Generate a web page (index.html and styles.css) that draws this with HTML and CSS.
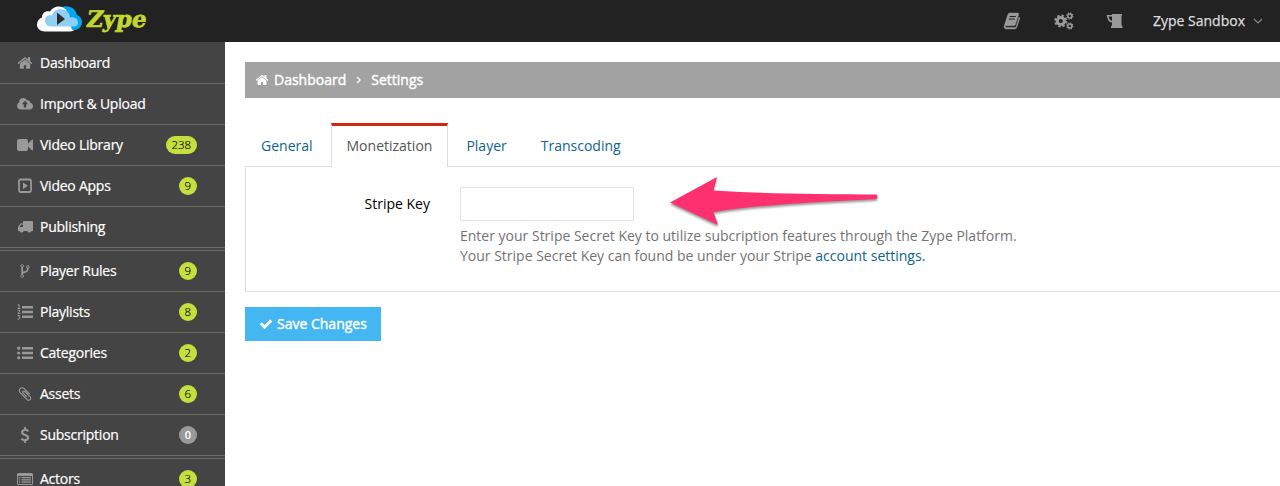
FILE: index.html
```html
<!DOCTYPE html>
<html lang="en">
<head>
<meta charset="utf-8">
<title>Zype - Settings</title>
<link rel="stylesheet" href="styles.css">
</head>
<body>
<svg class="defs" width="0" height="0">
  <symbol id="home" viewBox="0 0 1792 1792"><path d="M1472 992v480q0 26-19 45t-45 19h-384v-384h-256v384h-384q-26 0-45-19t-19-45v-480q0-1 .5-3t.5-3l575-474 575 474q1 2 1 6zm223-69l-62 74q-8 9-21 11h-3q-13 0-21-7l-692-577-692 577q-12 8-24 7-13-2-21-11l-62-74q-8-10-7-23.500t11-21.500l719-599q32-26 76-26t76 26l244 204v-195q0-14 9-23t23-9h192q14 0 23 9t9 23v408l219 182q10 8 11 21.500t-7 23.500z"/></symbol>
</svg>
<header class="topbar">
  <a class="brand">
    <svg width="124" height="34" viewBox="0 0 124 34">
      <path fill="#00a6ee" d="M20 8C22 3 28 1 33 3c4 1 6 4 7 8 3 1 5 4 5 7 0 5-4 8-8 8H22z"/>
      <path fill="#fff" d="M8 27.500c-5 0-8-3-8-7 0-3 2-6 5-7 0-4 3-7 8-6 3-5 9-6 13-4 4 2 6 5 7 8 4 1 7 4 7 8 0 5-3 8-7 8z"/>
      <path fill="#00a6ee" d="M29 4.500c4 1 7 4 7.500 7.500 4 1 7 3 6 8-.5 4-3 6-7 6l-3-6z"/>
      <path fill="#8ed0f3" d="M14 22.500c-4 0-6-3-6-6 0-4 3-6 7-5 1-4 5-7 10-6 5 0 8 4 8 8 5-1 8 2 8 5 0 2-1 4-4 4z"/>
      <path fill="#2d2d2d" d="M20 8.500 28 15l-8 6z"/>
      <text class="brand-name" transform="translate(48.500 22.500) skewX(-10)" textLength="60" lengthAdjust="spacingAndGlyphs">Zype</text>
    </svg>
  </a>
  <nav class="tools">
    <svg width="18" height="18" viewBox="0 0 18 18"><path fill="currentColor" d="M6.500 1h8.300q1.200.1.900 1.300l-3.300 10.200q-.4 1.200-1.500 1.200H3q-.8.100-.7 1 .1.800 1.200.8h8.600q.6 0 .9-.8l3-9.700q1.100.5.700 1.700l-3 8.900q-.5 1.400-1.900 1.400H3.200q-2-.1-2.200-2.300l3.400-11Q5 1.200 6.500 1z" stroke="currentColor" stroke-width=".4"/><path d="M6.700 4.500h6M5.800 7h6" stroke="#222" stroke-width="1.100"/></svg>
    <svg width="20" height="18" viewBox="0 0 20 18" fill="none" stroke="currentColor"><circle cx="6.800" cy="9" r="3.600" stroke-width="3"/><circle cx="6.800" cy="9" r="5.500" stroke-width="2" stroke-dasharray="2.400 1.920"/><g id="small-gear"><circle cx="15.800" cy="4" r="2" stroke-width="1.500"/><circle cx="15.800" cy="4" r="3" stroke-width="1.200" stroke-dasharray="1.300 1.056"/></g><use href="#small-gear" y="10"/></svg>
    <svg width="18" height="18" viewBox="0 0 18 18"><path fill="currentColor" fill-rule="evenodd" d="M6 2h10v1l-.5 1v9l1 1.500V16H5v-1.500l1-1.500v-2.500Q2.500 10 2 7.500L.7 4V3H6zM2.700 4.500 3.500 7Q4 8.500 6 8.700V4.500z"/></svg>
  </nav>
  <a class="account">Zype Sandbox
    <svg width="10" height="7" viewBox="0 0 10 7"><path d="m1 1 4 4 4-4" fill="none" stroke="#888" stroke-width="1.200"/></svg>
  </a>
</header>
<div class="page">
  <aside class="sidebar">
    <a class="item"><svg class="icon" viewBox="0 0 16 16"><use href="#home"/></svg><span>Dashboard</span></a>
    <a class="item"><svg class="icon" viewBox="0 0 16 16"><path fill-rule="evenodd" d="M4 13.500Q.2 13.300 0 9.800 0 7.500 2.200 6.500 2 2.500 6 2.100q3-.1 4.300 2.500 2.600-.8 3 2.200Q16 7.500 16 10.300q-.2 3-3 3.200zM8 4.800 4.800 8.200h2v3.300h2.400V8.200h2z"/></svg><span>Import &amp; Upload</span></a>
    <a class="item"><svg class="icon" viewBox="0 0 16 16"><path d="M2 2h7q2 0 2 2v2.500l3.500-3.600q1.500-1 1.500.5v9.200q0 1.500-1.500.5L11 9.500V12q0 2-2 2H2q-2 0-2-2V4q0-2 2-2z"/></svg><span>Video Library</span><b class="badge">238</b></a>
    <a class="item"><svg class="icon" viewBox="0 0 16 16"><rect x="2" y="1.500" width="12" height="12.500" rx="1.500" fill="none" stroke="#999" stroke-width="1.800"/><path d="m6 4.500 5 3.300-5 3.400z"/></svg><span>Video Apps</span><b class="badge">9</b></a>
    <a class="item"><svg class="icon" viewBox="0 0 16 16"><path fill-rule="evenodd" d="M7 2h8q1 0 1 1v9h-1.500a2.200 2.200 0 0 1-4.200 0H6.700a2.200 2.200 0 0 1-4.200 0H1V8l2.500-3.500H6V3q0-1 1-1zM2.500 8H6V5.500H4.200z"/></svg><span>Publishing</span></a>
    <div class="divider"></div>
    <a class="item"><svg class="icon" viewBox="0 0 1792 1792"><path d="M672 1472q0-40-28-68t-68-28-68 28-28 68 28 68 68 28 68-28 28-68zm0-1152q0-40-28-68t-68-28-68 28-28 68 28 68 68 28 68-28 28-68zm640 128q0-40-28-68t-68-28-68 28-28 68 28 68 68 28 68-28 28-68zm96 0q0 52-26 96.500t-70 69.500q-2 287-226 414-67 38-203 81-128 40-169.500 71t-41.500 100v26q44 25 70 69.500t26 96.500q0 80-56 136t-136 56-136-56-56-136q0-52 26-96.500t70-69.500v-820q-44-25-70-69.500t-26-96.500q0-80 56-136t136-56 136 56 56 136q0 52-26 96.500t-70 69.500v497q54-26 154-57 55-17 87.500-29.500t70.500-31 59-39.500 40.500-51 28-69.500 8.500-91.500q-44-25-70-69.500t-26-96.500q0-80 56-136t136-56 136 56 56 136z"/></svg><span>Player Rules</span><b class="badge">9</b></a>
    <a class="item"><svg class="icon" viewBox="0 0 16 16"><path d="M5 2h11v2.400H5zm0 4.800h11v2.400H5zm0 4.800h11V14H5z"/><path d="M.8 1.200 2 .5v4M.5 4.500h3M.6 6.500Q3.200 5.400 3 7L.8 9.500h2.700M.6 11.500h2.200l-1.200 1.400Q3.200 13 3 14.300q-.8 1.500-2.500.7" fill="none" stroke="#999"/></svg><span>Playlists</span><b class="badge">8</b></a>
    <a class="item"><svg class="icon" viewBox="0 0 16 16"><path d="M5 2h11v2.400H5zm0 4.800h11v2.400H5zm0 4.800h11V14H5z"/><circle cx="1.700" cy="3.200" r="1.600"/><circle cx="1.700" cy="8" r="1.600"/><circle cx="1.700" cy="12.800" r="1.600"/></svg><span>Categories</span><b class="badge">2</b></a>
    <a class="item"><svg class="icon" viewBox="0 0 1792 1792"><path d="M1596 1385q0 117-79 196t-196 79q-135 0-235-100l-777-776q-113-115-113-271 0-159 110-270t269-111q158 0 273 113l605 606q10 10 10 22 0 16-30.500 46.500t-46.500 30.500q-13 0-23-10l-606-607q-79-77-181-77-106 0-179 75t-73 181q0 105 76 181l776 777q63 63 145 63 64 0 106-42t42-106q0-82-63-145l-581-581q-26-24-60-24-29 0-48 19t-19 48q0 32 25 59l410 410q10 10 10 22 0 16-31 47t-47 31q-12 0-22-10l-410-410q-63-61-63-149 0-82 57-139t139-57q88 0 149 63l581 581q100 98 100 235z"/></svg><span>Assets</span><b class="badge">6</b></a>
    <a class="item"><svg class="icon" viewBox="0 0 1792 1792"><path d="M1362 1185q0 153-99.500 263.500t-258.500 136.500v175q0 14-9 23t-23 9h-135q-13 0-22.500-9.500t-9.500-22.500v-175q-66-9-127.500-31t-101.500-44.500-74-48-46.500-37.500-17.500-18q-17-21-2-41l103-135q7-10 23-12 15-2 24 9l2 2q113 99 243 125 37 8 74 8 81 0 142.500-43t61.500-122q0-28-15-53t-33.500-42-58.500-37.500-66-32-80-32.500q-39-16-61.500-25t-61.500-26.500-62.500-31-56.500-35.500-53.500-42.500-43.500-49-35.500-58-21-66.500-8.500-78q0-138 98-242t255-134v-180q0-13 9.500-22.500t22.500-9.500h135q14 0 23 9t9 23v176q57 6 110.500 23t87 33.500 63.500 37.500 39 29 15 14q17 18 5 38l-81 146q-8 15-23 16-14 3-27-7-3-3-14.500-12t-39-26.500-58.500-32-74.500-26-85.500-11.500q-95 0-155 43t-60 111q0 26 8.500 48t29.500 41.500 39.500 33 56 31 60.500 27 70 27.500q53 20 81 31.500t76 35 75.500 42.500 62 50 53 63.500 31.500 76.500 13 94z"/></svg><span>Subscription</span><b class="badge badge-empty">0</b></a>
    <div class="divider"></div>
    <a class="item"><svg class="icon" viewBox="0 0 16 16"><path fill-rule="evenodd" d="M1.500 2h13Q16 2 16 3.500v9q0 1.500-1.500 1.500h-13Q0 14 0 12.500v-9Q0 2 1.500 2zM1 5v8h14V5z"/><path d="M2 6h1.200v1.200H2zm2.500 0H14v1.200H4.500zM2 8.300h1.200v1.200H2zm2.500 0H14v1.200H4.500zM2 10.600h1.200v1.200H2zm2.500 0H14v1.200H4.500z"/></svg><span>Actors</span><b class="badge">3</b></a>
  </aside>
  <main class="content">
    <div class="breadcrumb">
      <svg class="crumb-home" viewBox="0 0 16 16"><use href="#home"/></svg><span>Dashboard</span>
      <svg class="crumb-arrow" viewBox="0 0 6 8"><path d="m1 1 3.200 3L1 7" fill="none" stroke="#fff" stroke-width="1.200"/></svg><span>Settings</span>
    </div>
    <div class="tabs">
      <a class="tab">General</a><a class="tab active">Monetization</a><a class="tab">Player</a><a class="tab">Transcoding</a>
    </div>
    <section class="panel">
      <label class="field-label" for="stripe-key">Stripe Key</label>
      <div class="field">
        <input id="stripe-key" class="field-input" type="text">
        <p class="help">Enter your Stripe Secret Key to utilize subcription features through the Zype Platform.<br>Your Stripe Secret Key can found be under your Stripe <a>account settings.</a></p>
        <svg class="arrow" width="216" height="58" viewBox="0 0 216 58"><path fill="#ff306f" d="M4 29.500 51 4l-3.500 13.500C100 21 160 21 210 21.500c2 .5 2 4 0 4.500-50 2.500-110 5-162.500 13L52 52z"/></svg>
      </div>
    </section>
    <button class="save" type="button"><svg width="14" height="14" viewBox="0 0 1792 1792"><path fill="#fff" d="M1671 566q0 40-28 68l-724 724-136 136q-28 28-68 28t-68-28l-136-136-362-362q-28-28-28-68t28-68l136-136q28-28 68-28t68 28l294 295 656-657q28-28 68-28t68 28l136 136q28 28 28 68z"/></svg>Save Changes</button>
  </main>
</div>
</body>
</html>
```
FILE: styles.css
```css
* { box-sizing: border-box; }
body {
  margin: 0;
  height: 486px;
  overflow: hidden;
  background: #fff;
  font: 14px/20px "Open Sans", sans-serif;
  color: #000;
}
.defs { display: block; }
.topbar {
  display: flex;
  align-items: center;
  height: 42px;
  padding: 0 17px 0 37px;
  background: #222;
}
.brand { display: flex; }
.brand svg { overflow: visible; }
.brand-name {
  fill: #c3d82e;
  stroke: #c3d82e;
  stroke-width: .7px;
  font: bold 23px "DejaVu Serif", serif;
}
.tools { display: flex; gap: 33px; margin-left: auto; color: #999; }
.tools svg { display: block; }
.tools svg:last-child { margin-left: -1px; }
.account {
  display: flex;
  align-items: center;
  gap: 8px;
  margin-left: 29px;
  color: #ddd;
  -webkit-text-stroke: .25px #ddd;
}
.page { display: flex; height: 444px; }
.sidebar { flex: 0 0 225px; padding-top: 1px; background: #444; overflow: hidden; }
.item {
  display: flex;
  align-items: center;
  height: 41px;
  padding: 0 28px 1px 17px;
  border-bottom: 1px solid #6b6b6b;
  color: #fff;
  letter-spacing: -.24px;
  -webkit-text-stroke: .2px #fff;
}
.icon { width: 16px; height: 16px; margin-right: 7px; fill: #999; }
.divider { height: 3px; border-bottom: 1px solid #6b6b6b; }
.badge {
  min-width: 18px;
  height: 18px;
  margin-left: auto;
  padding: 0 6px;
  border-radius: 9px;
  background: #c5e03d;
  color: #000;
  font-size: 11.500px;
  font-weight: 300;
  line-height: 18px;
  text-align: center;
  letter-spacing: -.1px;
  -webkit-text-stroke: .15px #000;
}
.badge-empty {
  background: #999;
  color: #fff;
  font-size: 11px;
  font-weight: 600;
  -webkit-text-stroke: 0;
}
.content { flex: 1; min-width: 0; padding: 20px 0 0 20px; }
.breadcrumb {
  display: flex;
  align-items: center;
  height: 36px;
  padding-left: 10px;
  background: #a2a2a2;
  color: #fff;
  -webkit-text-stroke: .4px #fff;
}
.crumb-home { width: 14px; height: 14px; margin-right: 5px; fill: #fff; }
.crumb-arrow { width: 6px; height: 8px; margin: 0 9px 0 10px; }
.tabs { display: flex; gap: 2px; height: 43px; margin-top: 25px; }
.tab {
  height: 44px;
  padding: 13px 16px 0;
  color: #0d638f;
}
.tab.active {
  position: relative;
  padding: 10px 15px 0;
  border: 1px solid #ddd;
  border-top: 3px solid #d12610;
  border-bottom: 0;
  background: #fff;
  color: #555;
}
.panel {
  display: flex;
  height: 126px;
  padding-top: 20px;
  border: 1px solid #ddd;
  border-right: 0;
}
.field-label { width: 184px; margin-right: 30px; padding-top: 7px; text-align: right; }
.field { position: relative; }
.field-input {
  display: block;
  width: 174px;
  height: 34px;
  border: 1px solid #e5e5e5;
  background: #fff;
}
.help { margin: 5px 0 0; color: #737373; white-space: nowrap; }
.help a { color: #0d638f; }
.arrow { position: absolute; left: 206px; top: -14px; filter: drop-shadow(0 2px 1px #0006); }
.save {
  display: flex;
  align-items: center;
  gap: 4px;
  width: 136px;
  height: 34px;
  margin-top: 15px;
  padding: 0 14px;
  border: 0;
  background: #44b6f1;
  color: #fff;
  font: 14px/20px "Open Sans", sans-serif;
  white-space: nowrap;
  -webkit-text-stroke: .4px #fff;
}
```
